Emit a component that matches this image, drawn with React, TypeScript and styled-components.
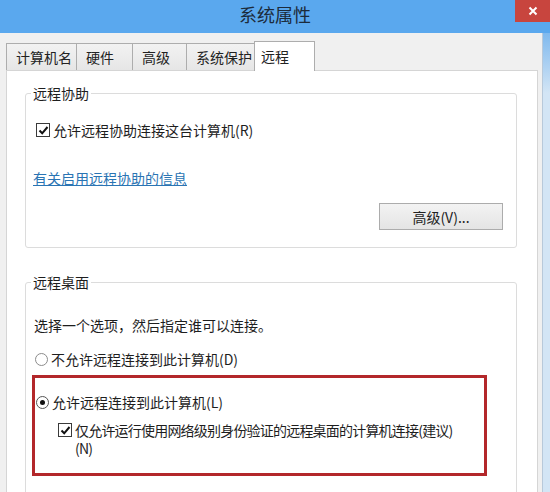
import React from 'react';
import styled, { createGlobalStyle } from 'styled-components';

const GlobalStyle = createGlobalStyle`
  * { box-sizing: border-box; }
  html, body { margin: 0; padding: 0; }
  body {
    width: 550px;
    height: 492px;
    overflow: hidden;
    font-family: 'Noto Sans CJK SC', 'Noto Sans', sans-serif;
    font-size: 14px;
    color: #1e1e1e;
  }
`;

const Window = styled.div`
  display: flex;
  flex-direction: column;
  width: 550px;
  height: 492px;
  overflow: hidden;
  background: #f0f0f0;
`;

const TitleBar = styled.div`
  display: flex;
  align-items: flex-start;
  height: 33px;
  flex-shrink: 0;
  background: #5aa8ee;
`;

const Title = styled.div`
  flex: 1;
  padding-left: 35px;
  text-align: center;
  line-height: 29px;
  font-size: 18px;
  color: #1c2b3b;
`;

const CloseButton = styled.div`
  display: flex;
  align-items: center;
  justify-content: center;
  width: 35px;
  height: 22px;
  background: #c8453e;
`;

const Body = styled.div`
  display: flex;
  flex: 1;
  min-height: 0;
`;

const Main = styled.div`
  display: flex;
  flex-direction: column;
  flex: 1;
  min-width: 0;
  padding: 8px 4px 0 6px;
`;

const Frame = styled.div`
  width: 8px;
  border-left: 1px solid #b8c9da;
  background: linear-gradient(#7fb9ee, #d3e5f5 60px);
`;

const TabRow = styled.div`
  position: relative;
  z-index: 1;
  display: flex;
  align-items: flex-end;
  height: 30px;
  margin-bottom: -1px;
`;

const Tab = styled.div<{ $width: number; $active?: boolean }>`
  width: ${(p) => p.$width}px;
  height: ${(p) => (p.$active ? 30 : 27)}px;
  margin-bottom: ${(p) => (p.$active ? 0 : 1)}px;
  margin-right: -1px;
  padding-left: ${(p) => (p.$active ? 6 : 9)}px;
  line-height: ${(p) => (p.$active ? 29 : 26)}px;
  border: 1px solid #adadad;
  border-bottom: none;
  background: ${(p) => (p.$active ? '#fff' : 'linear-gradient(#f2f2f2, #e6e6e6)')};
  color: #222;
  white-space: nowrap;
`;

const Panel = styled.div`
  display: flex;
  flex-direction: column;
  flex: 1;
  min-height: 0;
  overflow: hidden;
  padding: 12px 20px 0 18px;
  background: #fff;
  border: 1px solid #d5d5d5;
  border-bottom: none;
`;

const Group = styled.fieldset<{ $grow?: boolean }>`
  display: flex;
  flex-direction: column;
  min-width: 0;
  margin: ${(p) => (p.$grow ? '24px 0 -40px' : '0')};
  padding: 0 13px 17px 8px;
  border: 1px solid #dcdcdc;
  border-radius: 3px;
  ${(p) => (p.$grow ? 'flex: 1;' : '')}
`;

const Legend = styled.legend`
  margin-left: -3px;
  padding: 0 2px;
  line-height: 20px;
  color: #1e1e1e;
`;

const Row = styled.div<{ $top?: number; $left?: number }>`
  display: flex;
  align-items: center;
  gap: 3px;
  margin-top: ${(p) => p.$top ?? 0}px;
  margin-left: ${(p) => p.$left ?? 0}px;
  line-height: 20px;
  white-space: nowrap;
`;

const WrapRow = styled(Row)`
  align-items: flex-start;
  line-height: 18px;
  white-space: normal;
`;

const LongLabel = styled.span`
  letter-spacing: -0.8px;
`;

const Box = styled.span`
  display: inline-flex;
  align-items: center;
  justify-content: center;
  flex-shrink: 0;
  width: 14px;
  height: 14px;
  border: 1px solid #3a3a3a;
  background: #fff;
`;

const WrapBox = styled(Box)`
  margin-top: 2px;
`;

const Radio = styled.span<{ $on?: boolean }>`
  display: inline-flex;
  align-items: center;
  justify-content: center;
  flex-shrink: 0;
  width: 13px;
  height: 13px;
  border-radius: 50%;
  border: 1px solid ${(p) => (p.$on ? '#555' : '#8c8c8c')};
  background: #fff;

  &::after {
    content: '';
    display: ${(p) => (p.$on ? 'block' : 'none')};
    width: 5px;
    height: 5px;
    border-radius: 50%;
    background: #111;
  }
`;

const InfoLink = styled.a`
  margin-top: 28px;
  margin-left: -1px;
  line-height: 20px;
  color: #2a74b3;
  text-decoration: underline;
  align-self: flex-start;
`;

const Button = styled.button`
  align-self: flex-end;
  width: 124px;
  height: 27px;
  margin-top: 15px;
  border: 1px solid #acacac;
  background: linear-gradient(#f3f3f3, #e4e4e4);
  font-family: inherit;
  font-size: 14px;
  color: #222;
`;

const Hint = styled.div`
  margin-top: 23px;
  line-height: 20px;
`;

const Highlight = styled.div`
  width: 455px;
  margin: 6px 0 0 -2px;
  padding: 14px 0 16px 1px;
  border: 3px solid #b3282a;
`;

const Check = () => (
  <svg width="11" height="11" viewBox="0 0 11 11">
    <path d="M1.5 5.5 L4.2 8.3 L9.5 2" fill="none" stroke="#111" strokeWidth="2" />
  </svg>
);

const tabs = [
  { label: '计算机名', width: 71 },
  { label: '硬件', width: 57 },
  { label: '高级', width: 55 },
  { label: '系统保护', width: 69 },
  { label: '远程', width: 61, active: true },
];

const App: React.FC = () => {
  return (
    <>
      <GlobalStyle />
      <Window>
        <TitleBar>
          <Title>系统属性</Title>
          <CloseButton>
            <svg width="10" height="10" viewBox="0 0 10 10">
              <path d="M1.5 1.5 L8.5 8.5 M8.5 1.5 L1.5 8.5" stroke="#fff" strokeWidth="2" />
            </svg>
          </CloseButton>
        </TitleBar>
        <Body>
          <Main>
            <TabRow>
              {tabs.map((t) => (
                <Tab key={t.label} $width={t.width} $active={t.active}>
                  {t.label}
                </Tab>
              ))}
            </TabRow>
            <Panel>
              <Group>
                <Legend>远程协助</Legend>
                <Row $top={17} $left={2}>
                  <Box>
                    <Check />
                  </Box>
                  允许远程协助连接这台计算机(R)
                </Row>
                <InfoLink>有关启用远程协助的信息</InfoLink>
                <Button>高级(V)...</Button>
              </Group>
              <Group $grow>
                <Legend>远程桌面</Legend>
                <Hint>选择一个选项，然后指定谁可以连接。</Hint>
                <Row $top={14} $left={1}>
                  <Radio />
                  不允许远程连接到此计算机(D)
                </Row>
                <Highlight>
                  <Row>
                    <Radio $on />
                    允许远程连接到此计算机(L)
                  </Row>
                  <WrapRow $top={9} $left={22}>
                    <WrapBox>
                      <Check />
                    </WrapBox>
                    <LongLabel>
                      仅允许运行使用网络级别身份验证的远程桌面的计算机连接(建议)
                      <br />
                      (N)
                    </LongLabel>
                  </WrapRow>
                </Highlight>
              </Group>
            </Panel>
          </Main>
          <Frame />
        </Body>
      </Window>
    </>
  );
};

export default App;
